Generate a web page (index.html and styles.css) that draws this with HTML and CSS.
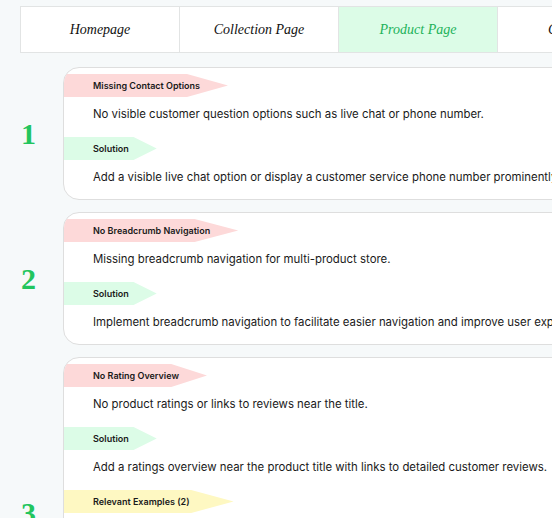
FILE: index.html
```html
<!DOCTYPE html>
<html lang="en">
<head>
  <meta charset="UTF-8" />
  <meta name="viewport" content="width=device-width, initial-scale=1.0" />
  <title>Store Audit</title>
  <link rel="stylesheet" href="styles.css">
</head>
<body>
  <div class="page">
    <!-- Page tabs -->
    <nav class="tabs">
      <div class="tab">Homepage</div>
      <div class="tab">Collection Page</div>
      <div class="tab active">Product Page</div>
      <div class="tab">Cart Page</div>
      <div class="tab">Checkout Page</div>
    </nav>

    <!-- Issues -->
    <div class="issues">
      <div class="issue">
        <div class="issue-num">1</div>
        <div class="card">
          <span class="tag tag-problem">Missing Contact Options</span>
          <p class="desc">No visible customer question options such as live chat or phone number.</p>
          <span class="tag tag-solution">Solution</span>
          <p class="desc">Add a visible live chat option or display a customer service phone number prominently on the product page.</p>
        </div>
      </div>

      <div class="issue">
        <div class="issue-num">2</div>
        <div class="card">
          <span class="tag tag-problem">No Breadcrumb Navigation</span>
          <p class="desc">Missing breadcrumb navigation for multi-product store.</p>
          <span class="tag tag-solution">Solution</span>
          <p class="desc">Implement breadcrumb navigation to facilitate easier navigation and improve user experience.</p>
        </div>
      </div>

      <div class="issue">
        <div class="issue-num">3</div>
        <div class="card">
          <span class="tag tag-problem">No Rating Overview</span>
          <p class="desc">No product ratings or links to reviews near the title.</p>
          <span class="tag tag-solution">Solution</span>
          <p class="desc">Add a ratings overview near the product title with links to detailed customer reviews.</p>
          <span class="tag tag-examples">Relevant Examples (2)</span>
          <div class="examples">
            <div class="example"></div>
            <div class="example"></div>
          </div>
        </div>
      </div>
    </div>
  </div>
</body>
</html>
```

FILE: styles.css
```css
:root {
  --bg-page: #f6f9fa;
  --border: #dedede;
  --text: #1a1a1a;
  --green: #22c55e;
  --green-light: #dcfce7;
  --red-light: #fdd9d9;
  --yellow-light: #fef8c2;
}

* {
  box-sizing: border-box;
}

body {
  margin: 0;
  background-color: var(--bg-page);
  font-family: Inter, "Noto Sans", sans-serif;
  color: var(--text);
  overflow: hidden;
}

.page {
  width: 960px;
  padding: 6px 0 20px 20px;
}

/* Tabs */
.tabs {
  display: flex;
  background-color: #fff;
  border: 1px solid #e2e4e4;
  margin-bottom: 14px;
}
.tab {
  width: 159px;
  height: 45px;
  display: flex;
  align-items: center;
  justify-content: center;
  font-family: "Liberation Serif", serif;
  font-style: italic;
  font-size: 14px;
  color: #111;
  border-left: 1px solid #e2e4e4;
}
.tab:first-child {
  border-left: none;
  width: 158px;
}
.tab.active {
  background-color: var(--green-light);
  color: #22b25a;
}

/* Issues */
.issues {
  display: flex;
  flex-direction: column;
  gap: 12px;
}
.issue {
  display: flex;
  align-items: center;
}
.issue-num {
  width: 43px;
  flex-shrink: 0;
  padding-left: 1px;
  font-family: "Liberation Serif", serif;
  font-weight: 700;
  font-size: 30px;
  color: var(--green);
}

.card {
  flex: 1;
  background-color: #fff;
  border: 1px solid var(--border);
  border-radius: 16px;
  overflow: hidden;
  padding: 6px 0 0;
  display: flex;
  flex-direction: column;
  align-items: flex-start;
}

.tag {
  display: inline-block;
  height: 23px;
  line-height: 23px;
  padding: 0 28px 0 29px;
  font-size: 9px;
  font-weight: 600;
  color: #1a1a1a;
  clip-path: polygon(0 0, 75% 0, 100% 50%, 75% 100%, 0 100%);
}
.tag-problem {
  background-color: var(--red-light);
}
.tag-solution {
  background-color: var(--green-light);
}
.tag-examples {
  background-color: var(--yellow-light);
  padding-right: 44px;
}

.desc {
  margin: 7px 0 13px;
  padding-left: 29px;
  font-size: 11.4px;
  line-height: 20px;
  white-space: nowrap;
}
.desc:last-child {
  margin-bottom: 12px;
}

.examples {
  display: flex;
  gap: 12px;
  margin: 7px 0 13px;
  padding-left: 29px;
}
.example {
  width: 220px;
  height: 134px;
  border: 1px solid var(--border);
  border-radius: 8px;
  background-color: #fafafa;
}
```
